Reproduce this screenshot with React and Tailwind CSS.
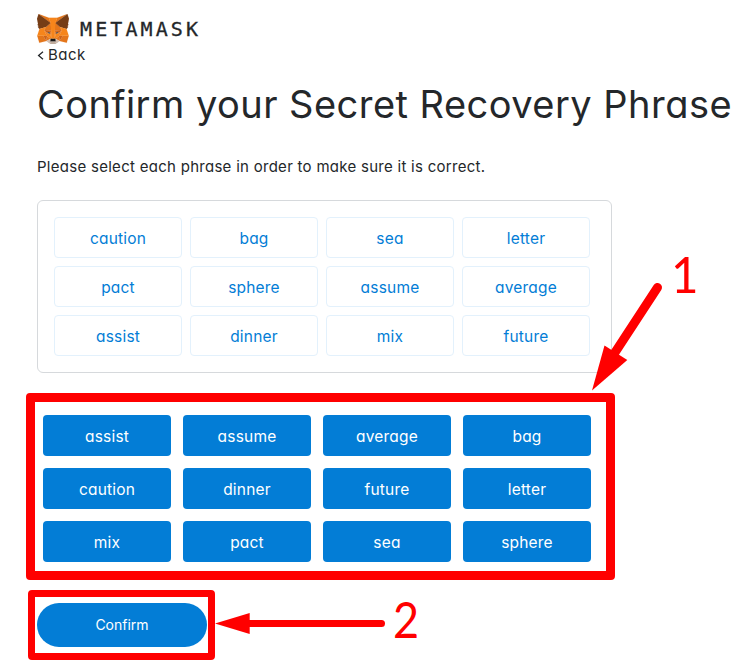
import React from "react";

const FOX = [
  ["#E2761B", "274.1,35.5 174.6,109.4 193,65.8"],
  ["#E4761B", "44.4,35.5 143.1,110.1 125.6,65.8"],
  ["#E4761B", "238.3,206.8 211.8,247.4 268.5,263 284.8,207.7"],
  ["#E4761B", "33.9,207.7 50.1,263 106.8,247.4 80.3,206.8"],
  ["#E4761B", "103.6,138.2 87.8,162.1 144.1,164.6 142.1,104.1"],
  ["#E4761B", "214.9,138.2 175.9,103.4 174.6,164.6 230.8,162.1"],
  ["#E4761B", "106.8,247.4 140.6,230.9 111.4,208.1"],
  ["#E4761B", "177.9,230.9 211.8,247.4 207.1,208.1"],
  ["#D7C1B3", "211.8,247.4 177.9,230.9 180.6,253 180.3,262.3"],
  ["#D7C1B3", "106.8,247.4 138.3,262.3 138.1,253 140.6,230.9"],
  ["#233447", "138.8,193.5 110.6,185.2 130.5,176.1"],
  ["#233447", "179.7,193.5 188,176.1 208,185.2"],
  ["#CD6116", "106.8,247.4 111.6,206.8 80.3,207.7"],
  ["#CD6116", "207,206.8 211.8,247.4 238.3,207.7"],
  ["#CD6116", "230.8,162.1 174.6,164.6 179.8,193.5 188.1,176.1 208.1,185.2"],
  ["#CD6116", "110.6,185.2 130.6,176.1 138.8,193.5 144.1,164.6 87.8,162.1"],
  ["#E4751F", "87.8,162.1 111.4,208.1 110.6,185.2"],
  ["#E4751F", "208.1,185.2 207.1,208.1 230.8,162.1"],
  ["#E4751F", "144.1,164.6 138.8,193.5 145.4,227.6 146.9,182.7"],
  ["#E4751F", "174.6,164.6 171.9,182.6 173.1,227.6 179.8,193.5"],
  ["#F6851B", "179.8,193.5 173.1,227.6 177.9,230.9 207.1,208.1 208.1,185.2"],
  ["#F6851B", "110.6,185.2 111.4,208.1 140.6,230.9 145.4,227.6 138.8,193.5"],
  ["#C0AD9E", "180.3,262.3 180.6,253 178.1,250.8 140.4,250.8 138.1,253 138.3,262.3 106.8,247.4 117.8,256.4 140.1,271.9 178.4,271.9 200.8,256.4 211.8,247.4"],
  ["#161616", "177.9,230.9 173.1,227.6 145.4,227.6 140.6,230.9 138.1,253 140.4,250.8 178.1,250.8 180.6,253"],
  ["#763D16", "278.3,114.2 286.8,73.4 274.1,35.5 177.9,106.9 214.9,138.2 267.2,153.5 278.8,140 273.8,136.4 281.8,129.1 275.6,124.3 283.6,118.2"],
  ["#763D16", "31.8,73.4 40.3,114.2 34.9,118.2 42.9,124.3 36.8,129.1 44.8,136.4 39.8,140 51.3,153.5 103.6,138.2 140.6,106.9 44.4,35.5"],
  ["#F6851B", "267.2,153.5 214.9,138.2 230.8,162.1 207.1,208.1 238.3,207.7 284.8,207.7"],
  ["#F6851B", "103.6,138.2 51.3,153.5 33.9,207.7 80.3,207.7 111.4,208.1 87.8,162.1"],
  ["#F6851B", "174.6,164.6 177.9,106.9 193.1,65.8 125.6,65.8 140.6,106.9 144.1,164.6 145.3,182.8 145.4,227.6 173.1,227.6 173.3,182.8"],
];

const PICKED = ["caution", "bag", "sea", "letter", "pact", "sphere", "assume", "average", "assist", "dinner", "mix", "future"];
const SORTED = ["assist", "assume", "average", "bag", "caution", "dinner", "future", "letter", "mix", "pact", "sea", "sphere"];

function Fox() {
  return (
    <svg className="h-[30px] w-8" viewBox="31.8 35.5 255 236.4" preserveAspectRatio="none">
      {FOX.map(([fill, points], i) => (
        <polygon key={i} fill={fill} stroke={fill} strokeWidth="1" points={points} />
      ))}
    </svg>
  );
}

function Annotations() {
  return (
    <div className="pointer-events-none absolute inset-0 text-[#ff0000]">
      <div className="absolute left-[26px] top-[393px] h-[187px] w-[589px] rounded-[4px] border-[9px] border-[#ff0000]" />
      <div className="absolute left-[28px] top-[590px] h-[70px] w-[187px] rounded-[4px] border-[7px] border-[#ff0000]" />
      <svg className="absolute inset-0" width="749" height="664" fill="currentColor" stroke="none">
        <path d="M657.5 287.5L614 354" stroke="currentColor" strokeWidth="9" strokeLinecap="round" />
        <path d="M592 390.5L604.5 345.5L627.3 360Z" />
        <path d="M381.5 623.5H248" stroke="currentColor" strokeWidth="7" strokeLinecap="round" />
        <path d="M215 623.5L249.7 613V634Z" />
      </svg>
      <span className="absolute left-[671px] top-[244px] origin-left scale-x-[0.95] font-[Lato,sans-serif] text-[50px] leading-[60px]">1</span>
      <span className="absolute left-[393px] top-[589px] origin-left scale-x-[0.9] font-[Lato,sans-serif] text-[50px] leading-[60px]">2</span>
    </div>
  );
}

export default function App() {
  return (
    <div className="relative h-[664px] w-[749px] overflow-hidden bg-white pl-[37px] pt-[14px] font-[Inter,sans-serif] text-[15px] text-[#24272a] [font-feature-settings:'cv11']">
      <header className="flex h-[30px] items-center">
        <Fox />
        <span className="ml-[11px] font-['DejaVu_Sans_Mono',monospace] text-[20px] leading-[30px] tracking-[3.1px] [-webkit-text-stroke:0.3px_#24272a]">METAMASK</span>
      </header>
      <div className="flex h-[22px] items-center tracking-[0.5px]">
        <svg className="mr-1 h-[9px] w-[7px]" viewBox="0 0 7 9" fill="none" stroke="currentColor" strokeWidth="1.3">
          <path d="M6 0.8L1.6 4.5L6 8.2" />
        </svg>
        <span>Back</span>
      </div>
      <h1 className="mt-[13px] h-[50px] whitespace-nowrap text-[38px] leading-[50px] tracking-[0.47px]">Confirm your Secret Recovery Phrase</h1>
      <p className="mt-[28px] h-5 whitespace-nowrap leading-5 tracking-[0.28px]">Please select each phrase in order to make sure it is correct.</p>
      <div className="mt-[23px] grid h-[173px] w-[575px] grid-cols-[repeat(4,128px)] content-start gap-2 rounded-[6px] border border-[#d6d9dc] p-4">
        {PICKED.map((w) => (
          <div key={w} className="flex h-[41px] items-center justify-center rounded-[4px] border border-[#e3f1fc] pt-[3px] text-[15.5px] tracking-[0.2px] text-[#037dd6]">{w}</div>
        ))}
      </div>
      <div className="ml-1.5 mt-[42px] grid grid-cols-[repeat(4,128px)] gap-3">
        {SORTED.map((w) => (
          <div key={w} className="flex h-[41px] items-center justify-center rounded-[4px] bg-[#037dd6] pt-[3px] text-[15.5px] tracking-[0.2px] text-white">{w}</div>
        ))}
      </div>
      <button className="mt-[41px] block h-11 w-[170px] rounded-full bg-[#037dd6] pb-0.5 text-[14px] text-white">Confirm</button>
      <Annotations />
    </div>
  );
}
